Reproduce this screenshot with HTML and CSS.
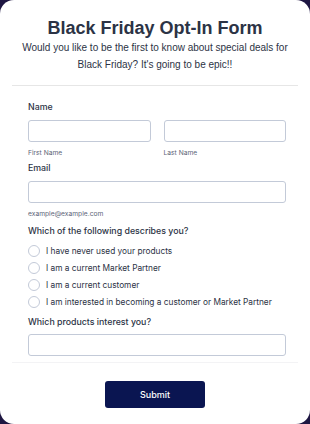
FILE: index.html
```html
<!DOCTYPE html>
<html lang="en">
<head>
    <meta charset="UTF-8">
    <meta name="viewport" content="width=device-width, initial-scale=1.0">
    <title>Black Friday Opt-In Form</title>
    <link rel="stylesheet" href="styles.css">
</head>
<body>
    <div class="card">
        <header class="form-header">
            <h1>Black Friday Opt-In Form</h1>
            <p>Would you like to be the first to know about special deals for Black Friday? It's going to be epic!!</p>
        </header>
        <form class="form-body">
            <div class="field">
                <label class="field-label">Name</label>
                <div class="name-row">
                    <div class="name-col">
                        <input type="text" class="text-input">
                        <span class="sublabel">First Name</span>
                    </div>
                    <div class="name-col">
                        <input type="text" class="text-input">
                        <span class="sublabel">Last Name</span>
                    </div>
                </div>
            </div>
            <div class="field">
                <label class="field-label">Email</label>
                <input type="email" class="text-input">
                <span class="sublabel">example@example.com</span>
            </div>
            <div class="field radio-field">
                <label class="field-label">Which of the following describes you?</label>
                <ul class="radio-list">
                    <li><span class="radio"></span>I have never used your products</li>
                    <li><span class="radio"></span>I am a current Market Partner</li>
                    <li><span class="radio"></span>I am a current customer</li>
                    <li><span class="radio"></span>I am interested in becoming a customer or Market Partner</li>
                </ul>
            </div>
            <div class="field last-field">
                <label class="field-label">Which products interest you?</label>
                <input type="text" class="text-input">
            </div>
            <div class="submit-row">
                <button type="button" class="submit-btn">Submit</button>
            </div>
        </form>
    </div>
</body>
</html>
```
FILE: styles.css
```css
body {
    margin: 0;
    background-color: #1e1642;
    font-family: "Inter", sans-serif;
    color: #2c3345;
}
.card {
    width: 310px;
    height: 424px;
    box-sizing: border-box;
    background: #fff;
    border-radius: 14px;
    padding: 0 12px;
    overflow: hidden;
}
.form-header {
    text-align: center;
    padding: 17px 0 12px;
    border-bottom: 1px solid #e6e6e6;
}
.form-header h1 {
    font-family: "Liberation Sans", Arial, sans-serif;
    font-size: 18px;
    font-weight: bold;
    margin: 0;
    line-height: 22px;
}
.form-header p {
    font-family: "Liberation Sans", Arial, sans-serif;
    font-size: 10px;
    line-height: 17px;
    margin: 0;
}
.form-body {
    padding: 15px 12px 0 16px;
}
.field {
    margin-bottom: 4px;
}
.field-label {
    display: block;
    font-size: 8.8px;
    line-height: 12px;
    font-weight: 500;
    margin-bottom: 7px;
}
.name-row {
    display: flex;
    gap: 13px;
}
.name-col {
    flex: 1;
}
.text-input {
    display: block;
    width: 100%;
    box-sizing: border-box;
    height: 22px;
    border: 1px solid #c3cad8;
    border-radius: 3px;
    margin: 0;
}
.sublabel {
    display: block;
    font-size: 6.7px;
    line-height: 10px;
    color: #5c6577;
    margin-top: 6px;
}
.radio-field {
    margin-top: 6px;
    margin-bottom: 6px;
}
.radio-field .field-label {
    margin-bottom: 5px;
}
.radio-list {
    list-style: none;
    padding: 0;
    margin: 0;
}
.radio-list li {
    display: flex;
    align-items: center;
    font-size: 8.3px;
    height: 17px;
}
.radio {
    width: 10px;
    height: 10px;
    border: 1px solid #c3cad8;
    border-radius: 50%;
    margin-right: 6px;
}
.last-field {
    margin-bottom: 6px;
}
.last-field .field-label {
    margin-bottom: 6px;
}
.submit-row {
    border-top: 1px solid #f3f3f5;
    margin: 0 -12px 0 -16px;
    padding-top: 18px;
    display: flex;
    justify-content: center;
}
.submit-btn {
    width: 100px;
    height: 27px;
    background: #0a1551;
    color: #fff;
    border: none;
    border-radius: 3px;
    font-family: "Inter", sans-serif;
    font-size: 9px;
    font-weight: 500;
}
```
